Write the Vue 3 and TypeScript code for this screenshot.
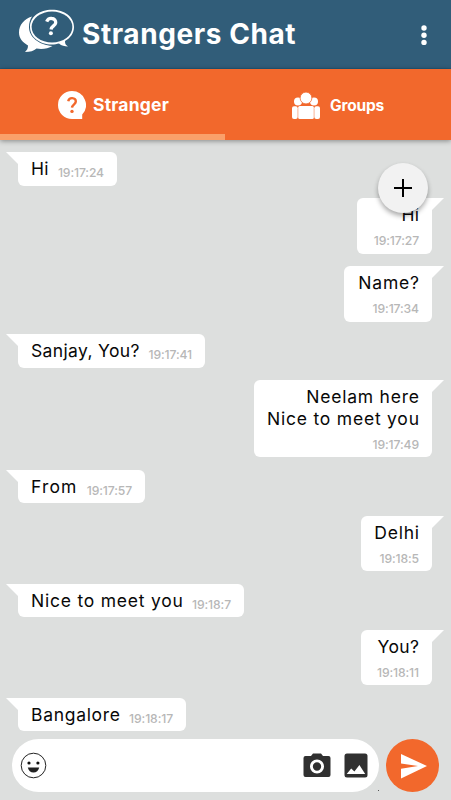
<script setup lang="ts">
interface Message {
  mine: boolean
  lines: string[]
  time: string
  width: number
  tracking: number
}

const messages: Message[] = [
  { mine: false, lines: ['Hi'], time: '19:17:24', width: 99, tracking: 0.3 },
  { mine: true, lines: ['Hi'], time: '19:17:27', width: 75, tracking: 0.3 },
  { mine: true, lines: ['Name?'], time: '19:17:34', width: 88, tracking: 0.8 },
  { mine: false, lines: ['Sanjay, You?'], time: '19:17:41', width: 187, tracking: 0.36 },
  { mine: true, lines: ['Neelam here', 'Nice to meet you'], time: '19:17:49', width: 178, tracking: 0.78 },
  { mine: false, lines: ['From'], time: '19:17:57', width: 127, tracking: 1.15 },
  { mine: true, lines: ['Delhi'], time: '19:18:5', width: 71, tracking: 0.75 },
  { mine: false, lines: ['Nice to meet you'], time: '19:18:7', width: 226, tracking: 0.78 },
  { mine: true, lines: ['You?'], time: '19:18:11', width: 71, tracking: 0.4 },
  { mine: false, lines: ['Bangalore'], time: '19:18:17', width: 168, tracking: 0.7 },
]
</script>

<template>
  <div class="screen">
    <header class="topbar">
      <svg class="logo" width="58" height="46" viewBox="0 0 58 46">
        <path d="M14 7.500C6 10 1 16 1 23.500c0 6 4 10 9 13 0 3-1 4.500-3 6.500 5 0 9-1 11.500-3.500 6 1 11.500 0 16-2.500C21 36 11 28 11 18c0-4 1-7.500 3-10.500Z" fill="#fff" />
        <path d="M34 .8C21.500.8 12 8 12 18s9.500 17.500 22 17.500c2.500 0 5-.5 7-1 2.500 2.200 5.500 3 9 3-2.500-1.500-3-3-3-5.500 5.500-3 9-8 9-14C56 8 46.500.8 34 .8Z" fill="#fff" />
        <ellipse cx="34" cy="18" rx="20.400" ry="15.500" fill="#315d79" />
        <path d="M28.700 12.700c1-2.600 3-3.400 5-3.200 2.700.2 4.200 2 4 4.300-.3 3-4.300 3.200-4.700 6.700" fill="none" stroke="#fff" stroke-width="3.300" />
        <circle cx="32.900" cy="24.300" r="2" fill="#fff" />
      </svg>
      <h1>Strangers Chat</h1>
      <svg class="more" width="8" height="22" viewBox="0 0 8 22" fill="#fff">
        <circle cx="4" cy="4" r="2.700" /><circle cx="4" cy="11.200" r="2.700" /><circle cx="4" cy="18.400" r="2.700" />
      </svg>
    </header>
    <nav class="tabs">
      <div class="tab active">
        <svg width="28" height="28" viewBox="0 0 28 28">
          <path d="M14 0a14 14 0 1 0 0 28h10.200v-4.500A14 14 0 0 0 14 0Z" fill="#fff" />
          <path d="M10.200 10.300c.5-2.200 2-3.300 4-3.200 2.300.1 3.800 1.600 3.600 3.600-.2 2.600-3.500 2.700-3.800 6" fill="none" stroke="#f2682c" stroke-width="2.400" />
          <circle cx="14" cy="20.400" r="1.700" fill="#f2682c" />
        </svg>
        <span class="stranger">Stranger</span>
      </div>
      <div class="tab">
        <svg class="people" width="28" height="28" viewBox="0 0 28 28">
          <g fill="#fff">
            <circle cx="6" cy="9.500" r="4" /><circle cx="22" cy="9.500" r="4" />
            <rect x="0" y="14.300" width="5.700" height="12.700" rx="2" />
            <rect x="22.300" y="14.300" width="5.700" height="12.700" rx="2" />
            <rect x="6.200" y="14" width="15.600" height="13" rx="1.500" />
          </g>
          <circle cx="14" cy="6" r="5.900" fill="#fff" stroke="#f2682c" stroke-width=".8" />
        </svg>
        <span class="groups">Groups</span>
      </div>
    </nav>
    <main class="chat">
      <div
        v-for="(m, i) in messages"
        :key="i"
        class="bubble"
        :class="m.mine ? 'mine' : 'theirs'"
        :style="{ width: m.width + 'px' }"
      >
        <svg class="tail" width="18" height="13" viewBox="0 0 18 13"><path d="M0 0h18v13h-5Z" fill="#fff" /></svg>
        <div class="text" :style="{ letterSpacing: m.tracking + 'px', marginRight: -m.tracking + 'px' }">
          <div v-for="line in m.lines" :key="line">{{ line }}</div>
        </div>
        <time>{{ m.time }}</time>
      </div>
    </main>
    <button class="fab" aria-label="Add">
      <svg width="20" height="20" viewBox="0 0 20 20"><path d="M10 1v18M1 10h18" stroke="#000" stroke-width="2" /></svg>
    </button>
    <footer class="composer">
      <div class="field">
        <svg width="27" height="27" viewBox="0 0 27 27">
          <circle cx="13.500" cy="13.500" r="12.300" fill="none" stroke="#222" stroke-width="1" />
          <circle cx="9" cy="11" r="1.600" fill="#111" /><circle cx="17.900" cy="11" r="1.600" fill="#111" />
          <path d="M7.800 15.500h11.400c-.6 3-2.800 5-5.700 5s-5.100-2-5.700-5Z" fill="#222" />
        </svg>
        <svg class="camera" width="28" height="25" viewBox="0 0 28 25">
          <path d="M2.500 3H8l2-2.500h8L20 3h5.500Q27.500 3 27.500 5v17q0 2-2 2h-23q-2 0-2-2V5q0-2 2-2Z" fill="#303030" />
          <circle cx="14" cy="13.500" r="5.600" fill="none" stroke="#fff" stroke-width="2.900" />
        </svg>
        <svg width="24" height="25" viewBox="0 0 24 25">
          <rect x=".5" y=".5" width="23" height="24" rx="2.500" fill="#303030" />
          <path d="M2.700 21l4.500-5.500 3.200 3 5-6.500 5.800 9Z" fill="#fff" />
        </svg>
      </div>
      <button class="send" aria-label="Send">
        <svg width="26" height="26" viewBox="0 0 26 26"><path d="M0 1l26 12L0 25.500v-9.700L17 13 0 10.500Z" fill="#fff" /></svg>
      </button>
      <i class="speck"></i>
    </footer>
  </div>
</template>

<style>
body { margin: 0; }
</style>

<style scoped>
* { box-sizing: border-box; }
button { border: 0; padding: 0; }
svg { display: block; flex: none; }
.screen {
  position: relative;
  width: 451px;
  height: 800px;
  overflow: hidden;
  display: flex;
  flex-direction: column;
  background: #dddfde;
  font-family: Inter, sans-serif;
}
.topbar {
  height: 69px;
  flex: none;
  display: flex;
  align-items: center;
  padding: 0 23px 0 18px;
  background: #315d79;
  border-bottom: 1px solid #245879;
}
.logo { margin-top: -5px; }
h1 {
  margin: 0 auto 0 6px;
  color: #fff;
  font-size: 28px;
  font-weight: 700;
  line-height: 34px;
  letter-spacing: 0.58px;
  white-space: nowrap;
}
.more { margin-top: 1px; }
.tabs {
  height: 71px;
  flex: none;
  display: grid;
  grid-template-columns: 225px 226px;
  background: #f2682c;
  box-shadow: 0 1px 5px #0006;
  z-index: 1;
}
.tab {
  display: flex;
  align-items: center;
  color: #fff;
  font-weight: 700;
  border-bottom: 6px solid transparent;
}
.tab.active { padding-left: 58px; padding-top: 7px; border-bottom-color: #faa06a; }
.tab:not(.active) { padding-left: 67px; padding-top: 8px; }
.stranger { margin-left: 7px; font-size: 17.500px; letter-spacing: 0.2px; margin-top: -1px; }
.groups { margin-left: 10px; font-size: 15.500px; letter-spacing: -0.2px; }
.chat {
  flex: 1;
  min-height: 0;
  display: flex;
  flex-direction: column;
  gap: 12.500px;
  padding: 12.200px 19px 0 18px;
}
.bubble {
  position: relative;
  flex: none;
  display: flex;
  padding: 0 13px;
  border-radius: 6px;
  background: #fff;
  color: #080808;
  white-space: nowrap;
}
.text { font-size: 17.500px; line-height: 21.500px; }
time {
  font-size: 12.200px;
  line-height: 16px;
  letter-spacing: -0.12px;
  color: #b7b7b7;
  font-weight: 500;
}
.theirs {
  height: 33.500px;
  align-self: flex-start;
  justify-content: space-between;
  padding-top: 6px;
  border-top-left-radius: 0;
}
.theirs time { margin-top: 7px; }
.mine {
  align-self: flex-end;
  flex-direction: column;
  align-items: flex-end;
  text-align: right;
  padding-top: 6px;
  padding-bottom: 4.500px;
  border-top-right-radius: 0;
}
.mine time { margin-top: 7.500px; }
.tail { position: absolute; top: 0; left: -12px; }
.mine .tail { left: auto; right: -12px; transform: scaleX(-1); }
.fab {
  position: absolute;
  left: 378px;
  top: 163px;
  width: 50px;
  height: 50px;
  border-radius: 50%;
  display: grid;
  place-items: center;
  background: #f2f2f2;
  box-shadow: 0 3px 5px #0005;
}
.composer {
  position: relative;
  height: 61px;
  flex: none;
  display: flex;
  align-items: flex-start;
  gap: 7px;
  padding-left: 12px;
}
.field {
  width: 367px;
  height: 53px;
  border-radius: 27px;
  background: #fff;
  display: flex;
  align-items: center;
  padding: 0 11px 0 8px;
}
.camera { margin: 0 13px 0 auto; }
.send {
  width: 53px;
  height: 53px;
  border-radius: 50%;
  background: #f2682c;
  display: grid;
  place-items: center;
  padding-left: 3px;
}
.speck { position: absolute; left: 378px; top: 51px; width: 1px; height: 1px; background: #555; }
</style>
